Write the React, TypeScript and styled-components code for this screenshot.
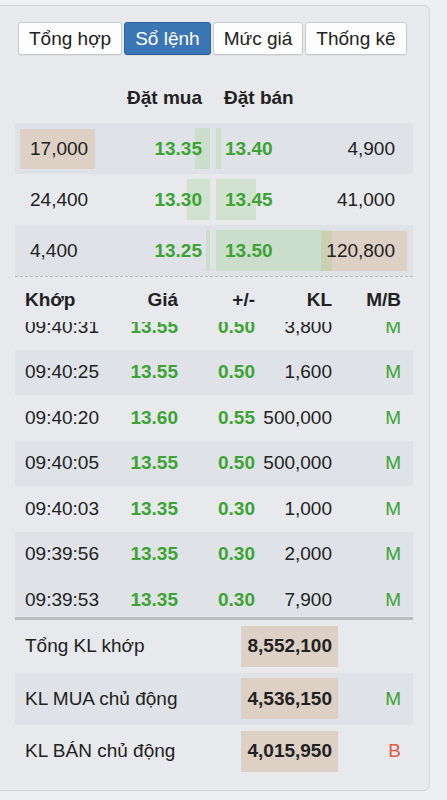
import React, { useLayoutEffect, useRef } from "react"
import styled, { createGlobalStyle } from "styled-components"

const GREEN = "#3ca432"
const RED = "#e35b45"
const TAN = "#ddd0c4"
const SHADE = "#dfe2e6"

const tabs = ["Tổng hợp", "Sổ lệnh", "Mức giá", "Thống kê"]

const book = [
  { bidVol: "17,000", bid: "13.35", ask: "13.40", askVol: "4,900", bidBar: 15, askBar: 5, bidHot: true, askHot: false },
  { bidVol: "24,400", bid: "13.30", ask: "13.45", askVol: "41,000", bidBar: 23, askBar: 40, bidHot: false, askHot: false },
  { bidVol: "4,400", bid: "13.25", ask: "13.50", askVol: "120,800", bidBar: 4, askBar: 116, bidHot: false, askHot: true },
]

const trades = [
  ["09:40:31", "13.55", "0.50", "3,800", "M"],
  ["09:40:25", "13.55", "0.50", "1,600", "M"],
  ["09:40:20", "13.60", "0.55", "500,000", "M"],
  ["09:40:05", "13.55", "0.50", "500,000", "M"],
  ["09:40:03", "13.35", "0.30", "1,000", "M"],
  ["09:39:56", "13.35", "0.30", "2,000", "M"],
  ["09:39:53", "13.35", "0.30", "7,900", "M"],
]

const totals = [
  { label: "Tổng KL khớp", value: "8,552,100", side: "" },
  { label: "KL MUA chủ động", value: "4,536,150", side: "M" },
  { label: "KL BÁN chủ động", value: "4,015,950", side: "B" },
]

const App = () => {
  const listRef = useRef<HTMLDivElement>(null)

  useLayoutEffect(() => {
    if (listRef.current) listRef.current.scrollTop = 18
  }, [])

  return (
    <Page>
      <GlobalStyle />
      <Panel>
        <Tabs>
          {tabs.map(t => (
            <Tab key={t} $active={t === "Sổ lệnh"}>
              {t}
            </Tab>
          ))}
        </Tabs>

        <BookHead>
          <BidHeadCell>Đặt mua</BidHeadCell>
          <AskHeadCell>Đặt bán</AskHeadCell>
        </BookHead>

        <Book>
          {book.map((r, i) => (
            <BookRow key={r.bid} $shade={i % 2 === 0}>
              <BidSide>
                <Bar $side="bid" style={{ width: r.bidBar }} />
                <VolBox $hot={r.bidHot}>
                  <Layer>{r.bidVol}</Layer>
                </VolBox>
                <Price>{r.bid}</Price>
              </BidSide>
              <AskSide>
                <Bar $side="ask" style={{ width: r.askBar }} />
                <Price>{r.ask}</Price>
                <AskVolBox $hot={r.askHot}>
                  <Layer>{r.askVol}</Layer>
                </AskVolBox>
              </AskSide>
            </BookRow>
          ))}
        </Book>

        <TradeHead>
          <span>Khớp</span>
          <span>Giá</span>
          <span>+/-</span>
          <span>KL</span>
          <span>M/B</span>
        </TradeHead>

        <TradeList ref={listRef}>
          {trades.map(([time, price, change, vol, side], i) => (
            <TradeRow key={time} $shade={i % 2 === 1 || i === trades.length - 1}>
              <span>{time}</span>
              <Green>{price}</Green>
              <Green>{change}</Green>
              <span>{vol}</span>
              <Side $buy={side === "M"}>{side}</Side>
            </TradeRow>
          ))}
        </TradeList>
        <Rule />

        {totals.map((t, i) => (
          <TotalRow key={t.label} $shade={i === 1}>
            <span>{t.label}</span>
            <TotalValue>{t.value}</TotalValue>
            <Side $buy={t.side === "M"}>{t.side}</Side>
          </TotalRow>
        ))}
      </Panel>
    </Page>
  )
}

export default App

const GlobalStyle = createGlobalStyle`
  * { box-sizing: border-box; }
  body {
    margin: 0;
    background: #edeff2;
    font-family: "Liberation Sans", Arial, sans-serif;
    color: #222;
    font-size: 19px;
  }
`

const Page = styled.div`
  width: 447px;
  height: 800px;
  padding-top: 5px;
  overflow: hidden;
`

const Panel = styled.div`
  width: 440px;
  height: 786px;
  margin-left: -10px;
  padding: 16px 16px 0 24px;
  background: #e7e9ed;
  border: 1px solid #d3d6da;
  border-radius: 6px;
`

const Tabs = styled.div`
  display: flex;
  gap: 2px;
  padding-left: 3px;
`

const Tab = styled.div<{ $active: boolean }>`
  height: 33px;
  display: flex;
  align-items: center;
  padding: 0 10px;
  font-size: 19px;
  border-radius: 3px;
  border: 1px solid ${p => (p.$active ? "#2d629a" : "#c8cbcf")};
  background: ${p => (p.$active ? "#3a76b4" : "#fdfdfd")};
  color: ${p => (p.$active ? "#fff" : "#222")};
  box-shadow: 0 1px 1px rgba(0, 0, 0, 0.06);
`

const BookHead = styled.div`
  display: grid;
  grid-template-columns: 195px 196px;
  column-gap: 6px;
  padding: 32px 0 14px;
  line-height: 22px;
  font-weight: bold;
`

const BidHeadCell = styled.div`
  text-align: right;
  padding-right: 8px;
`

const AskHeadCell = styled.div`
  padding-left: 8px;
`

const Book = styled.div`
  border-bottom: 1px dashed #b6babf;
`

const BookRow = styled.div<{ $shade: boolean }>`
  display: grid;
  grid-template-columns: 195px 196px;
  column-gap: 6px;
  height: 51px;
  background: ${p => (p.$shade ? SHADE : "transparent")};
`

const BidSide = styled.div`
  position: relative;
  display: flex;
  align-items: center;
  justify-content: space-between;
  padding: 0 8px 0 5px;
`

const AskSide = styled.div`
  position: relative;
  display: flex;
  align-items: center;
  justify-content: space-between;
  padding: 0 5px 0 9px;
`

const Bar = styled.div<{ $side: "bid" | "ask" }>`
  position: absolute;
  z-index: 1;
  top: 5px;
  bottom: 5px;
  ${p => (p.$side === "bid" ? "right: 0;" : "left: 0;")}
  background: rgba(150, 212, 130, 0.27);
`

const Layer = styled.span`
  position: relative;
  z-index: 2;
`

const VolBox = styled.div<{ $hot: boolean }>`
  width: 75px;
  height: 40px;
  display: flex;
  align-items: center;
  padding-left: 10px;
  background: ${p => (p.$hot ? TAN : "transparent")};
`

const AskVolBox = styled.div<{ $hot: boolean }>`
  width: 86px;
  height: 40px;
  display: flex;
  align-items: center;
  justify-content: flex-end;
  padding-right: 12px;
  background: ${p => (p.$hot ? TAN : "transparent")};
`

const Price = styled.span`
  position: relative;
  z-index: 2;
  color: ${GREEN};
  font-weight: bold;
`

const tradeColumns = `
  display: grid;
  grid-template-columns: 75px 78px 77px 77px 69px;
  align-items: center;
  padding: 0 11px 0 10px;
  & > span:not(:first-child) {
    text-align: right;
  }
`

const TradeHead = styled.div`
  ${tradeColumns}
  height: 45px;
  font-weight: bold;
`

const TradeList = styled.div`
  height: 294px;
  overflow: hidden;
`

const TradeRow = styled.div<{ $shade: boolean }>`
  ${tradeColumns}
  height: 45.5px;
  background: ${p => (p.$shade ? SHADE : "transparent")};
`

const Green = styled.span`
  color: ${GREEN};
  font-weight: bold;
`

const Side = styled.span<{ $buy: boolean }>`
  color: ${p => (p.$buy ? GREEN : RED)};
  text-align: right;
`

const Rule = styled.div`
  height: 3px;
  margin-top: 1px;
  background: #b9bdc2;
`

const TotalRow = styled.div<{ $shade: boolean }>`
  display: grid;
  grid-template-columns: 216px 97px 63px;
  align-items: center;
  height: 52.5px;
  padding-left: 10px;
  background: ${p => (p.$shade ? SHADE : "transparent")};
`

const TotalValue = styled.span`
  height: 41px;
  display: flex;
  align-items: center;
  justify-content: flex-end;
  padding-right: 6px;
  background: ${TAN};
  font-weight: bold;
`
